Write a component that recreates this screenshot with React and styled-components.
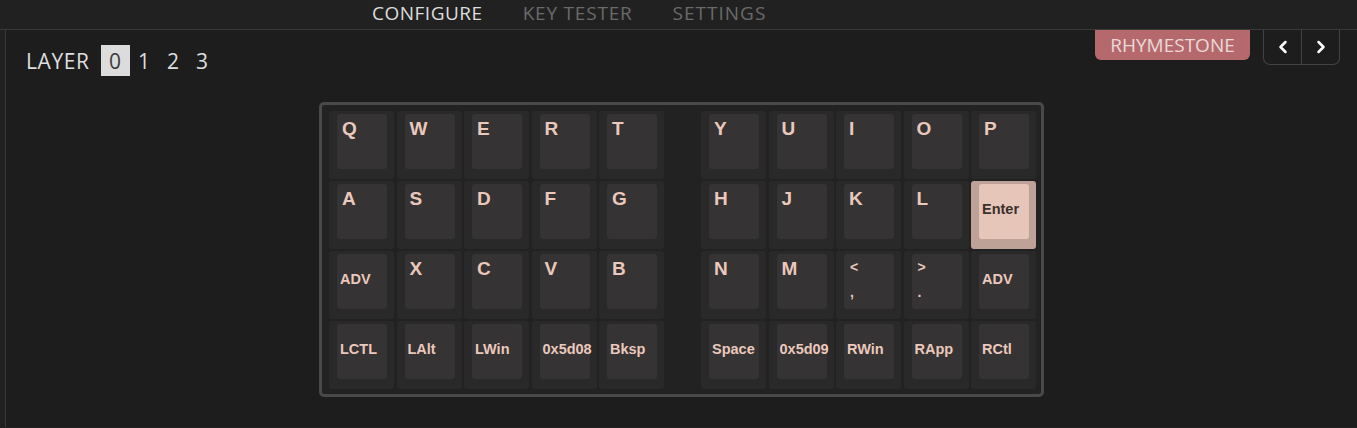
import React from 'react';
import styled, {createGlobalStyle} from 'styled-components';
import {ChevronLeft, ChevronRight} from 'lucide-react';

const GlobalStyle = createGlobalStyle`
    body {
        margin: 0;
        background-color: #222121;
        font-family: "Open Sans", "Noto Sans", sans-serif;
    }
`;

const Nav = styled.nav`
    display: flex;
    align-items: center;
    gap: 40px;
    height: 30px;
    padding: 0 0 3px 372px;
    box-sizing: border-box;
    border-bottom: 1px solid #3a3a3a;
    background-color: #222121;
`;

const NavItem = styled.span`
    font-size: 19px;
    color: ${p => (p.active ? '#dcdcdc' : '#6a6a6a')};
    letter-spacing: ${p => p.spacing || 0.4}px;
`;

const Main = styled.main`
    margin-left: 5px;
    min-height: 397px;
    border-left: 1px solid #3a3a3a;
    background-color: #1e1d1e;
`;

const Header = styled.div`
    display: flex;
    justify-content: space-between;
    align-items: flex-start;
    height: 46px;
    padding: 0 17px 0 20px;
`;

const Layers = styled.div`
    display: flex;
    align-items: center;
    margin-top: 15px;
    color: #dedede;
    font-size: 21px;
`;

const LayerLabel = styled.span`
    margin-right: 11px;
    letter-spacing: 0.6px;
`;

const LayerButton = styled.span`
    display: flex;
    align-items: center;
    justify-content: center;
    width: 29px;
    height: 31px;
    background-color: ${p => (p.active ? '#dcdcdc' : 'transparent')};
    color: ${p => (p.active ? '#3a3a3a' : '#dedede')};
`;

const Tools = styled.div`
    display: flex;
    align-items: flex-start;
    gap: 13px;
`;

const Badge = styled.span`
    display: flex;
    align-items: center;
    justify-content: center;
    width: 155px;
    height: 30px;
    border-radius: 0 0 6px 6px;
    background-color: #b5696c;
    color: #ead9d9;
    font-size: 19px;
`;

const ArrowGroup = styled.div`
    display: flex;
    height: 34px;
    border: 1px solid #434343;
    border-top: none;
    border-radius: 0 0 7px 7px;
`;

const ArrowButton = styled.span`
    display: flex;
    align-items: center;
    justify-content: center;
    width: 37px;
    color: #ffffff;
    & + & {
        border-left: 1px solid #434343;
    }
`;

const BoardWrap = styled.div`
    display: flex;
    justify-content: center;
    margin-top: 26px;
`;

const Board = styled.div`
    display: flex;
    gap: 37px;
    padding: 6px 5px 5px 7px;
    border: 3px solid #4a4949;
    border-radius: 5px;
    background-color: #232222;
`;

const Half = styled.div`
    display: grid;
    grid-template-columns: repeat(5, 65px);
    grid-auto-rows: 67.5px;
    gap: 2.5px;
`;

const Cell = styled.div`
    padding: 3px 7px 10px 8px;
    border-radius: 3px;
    background-color: ${p => (p.selected ? '#bea197' : '#2a2929')};
`;

const Cap = styled.div`
    display: flex;
    box-sizing: border-box;
    height: 100%;
    border-radius: 3px;
    background-color: ${p => (p.selected ? '#e7c6ba' : '#353333')};
    color: ${p => (p.selected ? '#3b302c' : '#ebc8bc')};
    font-family: "Liberation Sans", Arial, sans-serif;
    font-weight: bold;
    line-height: 1;
    white-space: nowrap;
`;

const BigLabel = styled.span`
    padding: 5px 0 0 5px;
    font-size: 19px;
`;

const SmallLabel = styled.span`
    align-self: center;
    padding: 0 0 5px 3px;
    font-size: 14.5px;
`;

const DualLabel = styled.span`
    display: flex;
    flex-direction: column;
    justify-content: space-between;
    width: 100%;
    padding: 6px 6px 10px;
    font-size: 14px;
`;

const left = [
    ['Q', 'W', 'E', 'R', 'T'],
    ['A', 'S', 'D', 'F', 'G'],
    ['ADV', 'X', 'C', 'V', 'B'],
    ['LCTL', 'LAlt', 'LWin', '0x5d08', 'Bksp'],
];

const right = [
    ['Y', 'U', 'I', 'O', 'P'],
    ['H', 'J', 'K', 'L', 'Enter'],
    ['N', 'M', '<\n,', '>\n.', 'ADV'],
    ['Space', '0x5d09', 'RWin', 'RApp', 'RCtl'],
];

const Label = ({text}) => {
    if (text.includes('\n')) {
        const [top, bottom] = text.split('\n');
        return (
            <DualLabel>
                <span>{top}</span>
                <span>{bottom}</span>
            </DualLabel>
        );
    }
    if (text.length === 1) return <BigLabel>{text}</BigLabel>;
    return <SmallLabel>{text}</SmallLabel>;
};

const Key = ({text}) => {
    const selected = text === 'Enter';
    return (
        <Cell selected={selected}>
            <Cap selected={selected}>
                <Label text={text} />
            </Cap>
        </Cell>
    );
};

const KeyHalf = ({rows}) => (
    <Half>
        {rows.flat().map((k, i) => <Key key={i} text={k} />)}
    </Half>
);

const App = () => (
    <>
        <GlobalStyle />
        <Nav>
            <NavItem active spacing={0.5}>CONFIGURE</NavItem>
            <NavItem spacing={0.8}>KEY TESTER</NavItem>
            <NavItem spacing={1}>SETTINGS</NavItem>
        </Nav>
        <Main>
            <Header>
                <Layers>
                    <LayerLabel>LAYER</LayerLabel>
                    {[0, 1, 2, 3].map(n => (
                        <LayerButton key={n} active={n === 0}>{n}</LayerButton>
                    ))}
                </Layers>
                <Tools>
                    <Badge>RHYMESTONE</Badge>
                    <ArrowGroup>
                        <ArrowButton><ChevronLeft size={20} strokeWidth={3} /></ArrowButton>
                        <ArrowButton><ChevronRight size={20} strokeWidth={3} /></ArrowButton>
                    </ArrowGroup>
                </Tools>
            </Header>
            <BoardWrap>
                <Board>
                    <KeyHalf rows={left} />
                    <KeyHalf rows={right} />
                </Board>
            </BoardWrap>
        </Main>
    </>
);

export default App;
